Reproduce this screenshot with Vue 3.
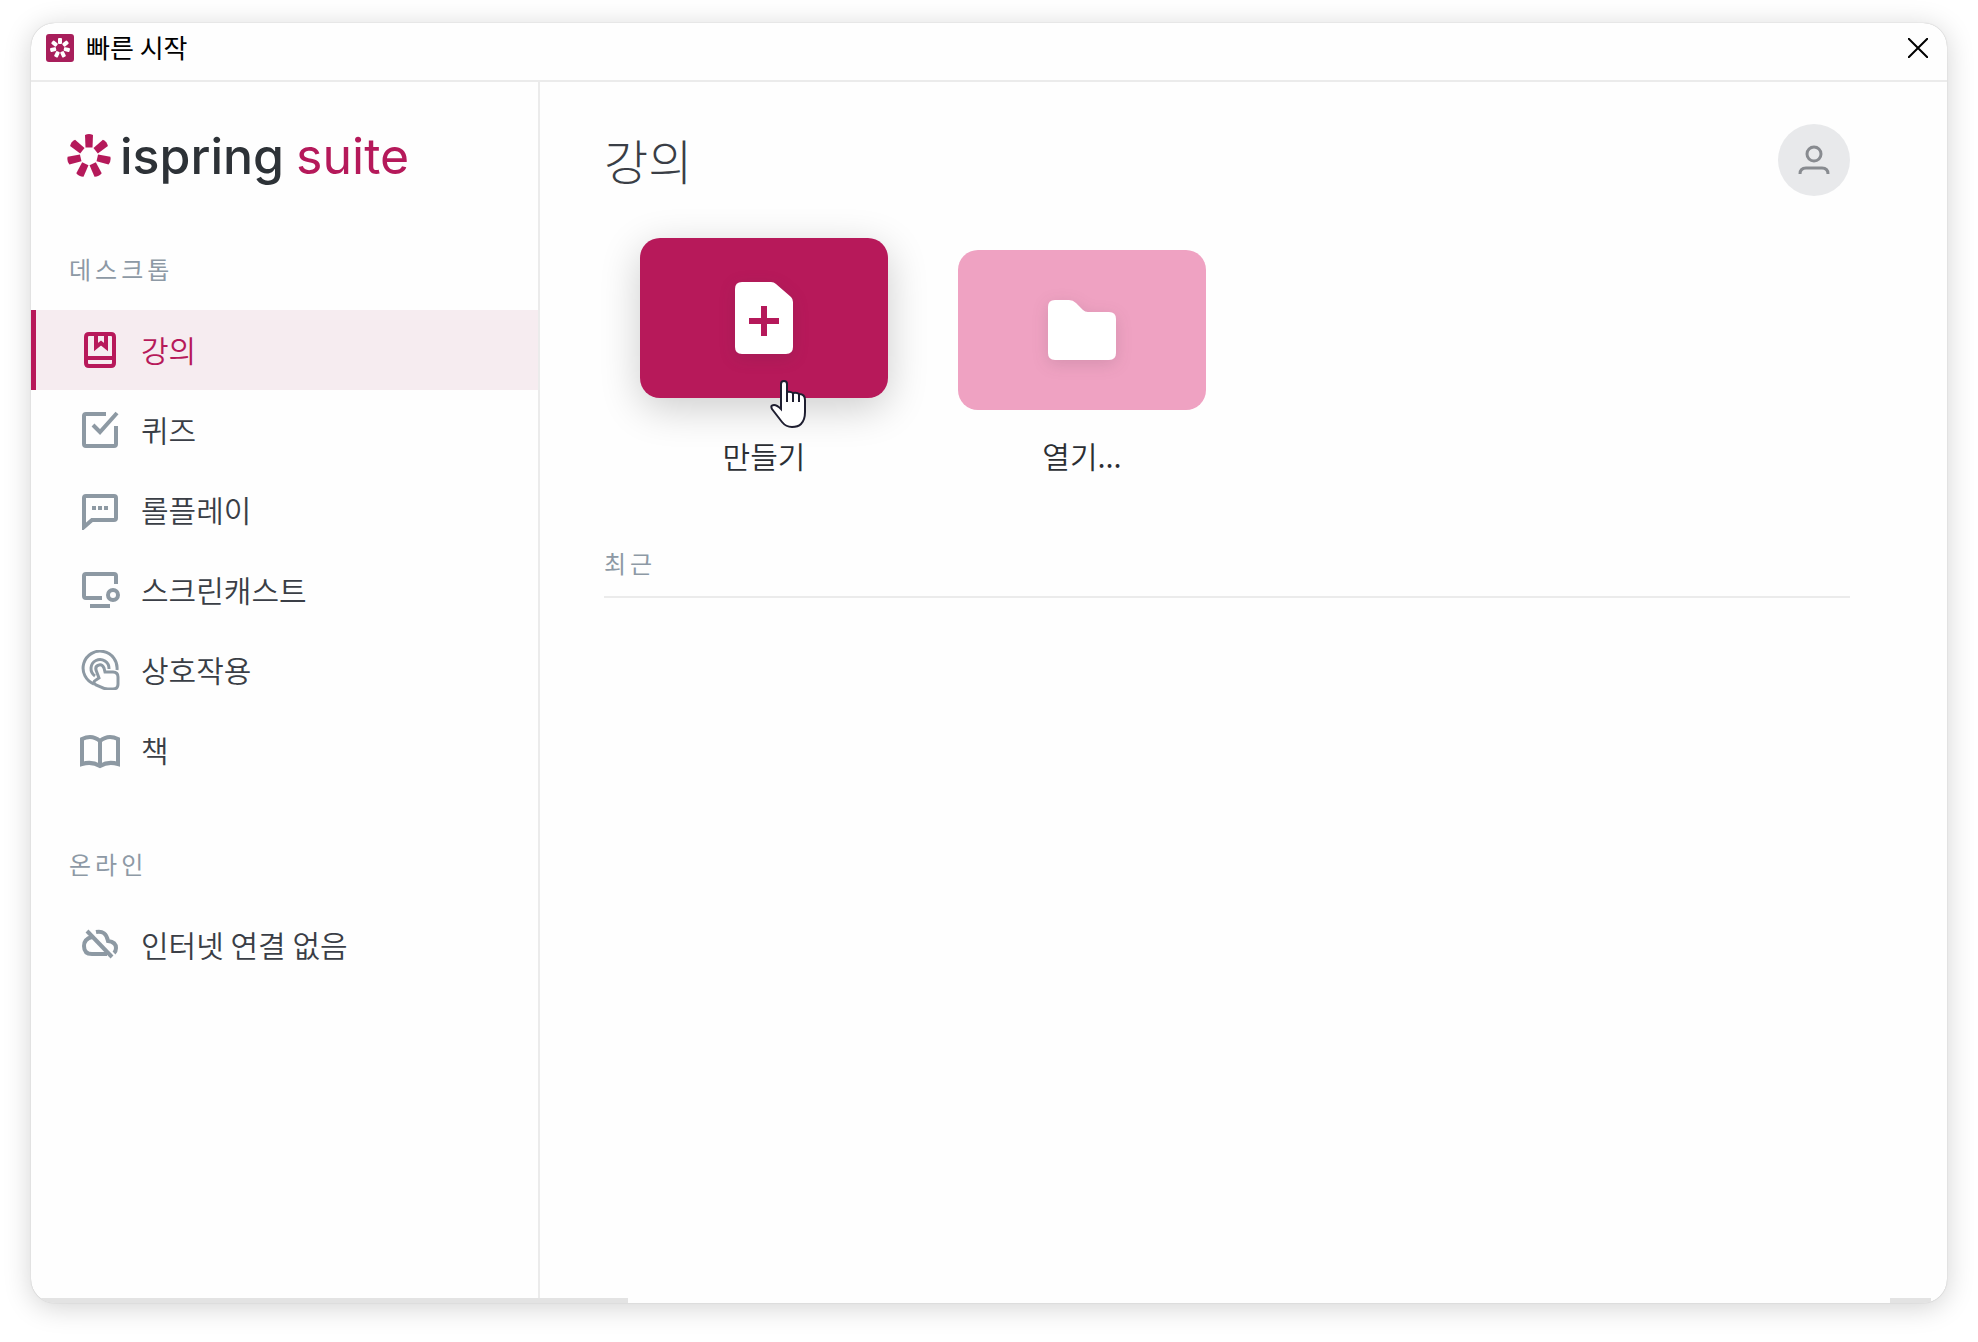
<template>
  <div class="window">
    <header class="titlebar">
      <svg class="app-icon" viewBox="0 0 28 28" aria-hidden="true">
        <rect width="28" height="28" rx="3" fill="#a81e5b" />
        <g fill="#fff">
          <rect
            v-for="n in 7"
            :key="n"
            x="12"
            y="4"
            width="4"
            height="6"
            rx="1"
            :transform="`rotate(${petalAngle(n)} 14 14)`"
          />
        </g>
      </svg>
      <span class="titlebar-text">빠른 시작</span>
      <button class="close" type="button" aria-label="닫기">
        <svg viewBox="0 0 20 20"><path d="M0 0L20 20M20 0L0 20" /></svg>
      </button>
    </header>

    <div class="body">
      <aside class="sidebar">
        <div class="logo">
          <svg class="logo-mark" viewBox="0 0 44 44" aria-hidden="true">
            <path
              v-for="n in 7"
              :key="n"
              d="M18 1Q22 -1 26 1L25.500 13.500H18.500Z"
              :transform="`rotate(${petalAngle(n)} 22 22)`"
            />
          </svg>
          <span class="logo-name">ispring</span>
          <span class="logo-product">suite</span>
        </div>

        <nav v-for="group in groups" :key="group.title" class="group">
          <h2 class="label">{{ group.title }}</h2>
          <button
            v-for="item in group.items"
            :key="item.text"
            type="button"
            class="nav-item"
            :class="{ 'nav-item--active': item.text === active }"
            @click="active = item.text"
          >
            <svg class="nav-icon" viewBox="0 0 40 40" aria-hidden="true">
              <path
                v-for="(d, i) in item.paths"
                :key="i"
                :d="d"
                :stroke-width="item.stroke"
              />
            </svg>
            <span>{{ item.text }}</span>
          </button>
        </nav>
      </aside>

      <main class="main">
        <header class="main-header">
          <h1>강의</h1>
          <button class="avatar" type="button" aria-label="계정">
            <svg viewBox="0 0 32 32">
              <circle cx="16" cy="10" r="7" />
              <path d="M2 30Q2 24 8 24H24Q30 24 30 30" />
            </svg>
          </button>
        </header>

        <div class="cards">
          <button class="card card--create" type="button">
            <span class="tile">
              <svg class="tile-icon" width="58" height="72" viewBox="0 0 58 72">
                <path d="M7 0H36Q39 0 41 2L56 15Q58 17 58 20V65Q58 72 51 72H7Q0 72 0 65V7Q0 0 7 0Z" fill="#fff" />
                <path d="M29 24V54M14 39H44" stroke="#b5195a" stroke-width="6" />
              </svg>
              <!-- Mauszeiger -->
              <svg class="pointer" viewBox="0 0 36 48" aria-hidden="true">
                <path
                  d="M11 28V4Q11 1 14 1Q17 1 17 4V12Q20 11 23 13Q27 12 29 14Q35 14 35 20V32Q35 40 31 44Q28 47 22 47Q16 47 12 42L2 29Q0 25 4 25Q7 25 11 29Z"
                  fill="#fff"
                />
                <path d="M17 12V22M23 13V22M29 14V22" />
              </svg>
            </span>
            <span class="card-text">만들기</span>
          </button>

          <button class="card card--open" type="button">
            <span class="tile">
              <svg class="tile-icon" width="68" height="60" viewBox="0 0 68 60">
                <path d="M7 0H21Q25 0 28 3L35 10Q37 12 40 12H61Q68 12 68 19V53Q68 60 61 60H7Q0 60 0 53V7Q0 0 7 0Z" fill="#fff" />
              </svg>
            </span>
            <span class="card-text">열기...</span>
          </button>
        </div>

        <section class="recent">
          <h2 class="recent-title">최근</h2>
        </section>
      </main>
    </div>

    <footer class="edge">
      <span class="edge-left" />
      <span class="edge-right" />
    </footer>
  </div>
</template>

<script setup>
import { ref } from "vue";

const active = ref("강의");

const groups = [
  {
    title: "데스크톱",
    items: [
      {
        text: "강의",
        stroke: 4,
        paths: [
          "M9 4H31Q34 4 34 7V33Q34 36 31 36H9Q6 36 6 33V7Q6 4 9 4Z",
          "M6 28H34",
          "M16 5V17L21 13L26 17V5",
        ],
      },
      {
        text: "퀴즈",
        stroke: 4,
        paths: ["M26 4H6Q4 4 4 6V34Q4 36 6 36H34Q36 36 36 34V16", "M13 15L20 22L37 3"],
      },
      {
        text: "롤플레이",
        stroke: 4,
        paths: [
          "M4 37V8Q4 6 6 6H34Q36 6 36 8V28Q36 30 34 30H12Z",
          "M12 18H16M18 18H22M24 18H28",
        ],
      },
      {
        text: "스크린캐스트",
        stroke: 4,
        paths: [
          "M36 14V6Q36 4 34 4H6Q4 4 4 6V26Q4 28 6 28H22",
          "M28 25a5 5 0 1 0 10 0a5 5 0 1 0 -10 0",
          "M10 36H30",
        ],
      },
      {
        text: "상호작용",
        stroke: 3,
        paths: [
          "M14 34A17 17 0 1 1 37 20",
          "M15 26A9 9 0 1 1 29 19",
          "M19 28L16 20Q15 16 19 15Q22 14 24 18L25 22H33Q38 22 38 27V34Q38 39 33 39H28Q24 39 21 37L16 35Q12 32 16 30Z",
        ],
      },
      {
        text: "책",
        stroke: 4,
        paths: ["M20 11Q12 4 2 9V34Q12 31 20 36Q28 31 38 34V9Q28 4 20 11V37"],
      },
    ],
  },
  {
    title: "온라인",
    items: [
      {
        text: "인터넷 연결 없음",
        stroke: 4,
        paths: [
          "M12 12Q4 14 4 21Q4 29 12 29H27",
          "M16 7Q26 5 28 16Q36 17 36 23Q36 26 34 28",
          "M7 6L32 32",
        ],
      },
    ],
  },
];

function petalAngle(n) {
  return ((n - 1) * 360) / 7;
}
</script>

<style>
body {
  margin: 0;
  background: #fff;
}
</style>

<style scoped>
.window {
  box-sizing: border-box;
  display: flex;
  flex-direction: column;
  min-height: calc(100vh - 62px);
  margin: 23px 31px 39px;
  background: #fefefe;
  border-radius: 24px;
  overflow: hidden;
  box-shadow: 0 0 1px rgba(0, 0, 0, 0.3), 0 4px 28px rgba(0, 0, 0, 0.18);
  font-family: "Noto Sans CJK KR", sans-serif;
  font-size: 30px;
  font-weight: 350;
  color: #3a3e46;
}

button {
  padding: 0;
  border: 0;
  background: none;
  font: inherit;
  color: inherit;
  cursor: pointer;
}

h1,
h2 {
  margin: 0;
  font-weight: 300;
}

svg {
  display: block;
  fill: none;
}

/* Titelleiste */

.titlebar {
  display: flex;
  align-items: center;
  height: 50px;
  padding: 0 19px 7px 15px;
  border-bottom: 2px solid #ebebeb;
}

.app-icon {
  width: 28px;
  height: 28px;
}

.titlebar-text {
  flex: 1;
  margin-left: 12px;
  padding-bottom: 2px;
  font-size: 26px;
  font-weight: 400;
  line-height: 32px;
  color: #000;
}

.close svg {
  width: 20px;
  height: 20px;
  stroke: #000;
  stroke-width: 2;
}

.body {
  display: flex;
  flex: 1;
}

/* Seitenleiste */

.sidebar {
  box-sizing: border-box;
  width: 509px;
  flex-shrink: 0;
  border-right: 2px solid #ebebeb;
}

.logo {
  display: flex;
  align-items: center;
  height: 148px;
  padding-left: 36px;
  font-family: Inter, sans-serif;
  font-size: 50px;
  line-height: 60px;
}

.logo-mark {
  width: 44px;
  height: 44px;
  fill: #b5195a;
}

.logo-name {
  margin-left: 9px;
  font-weight: 500;
  color: #2d3237;
}

.logo-product {
  margin-left: 12px;
  font-weight: 400;
  color: #b5195a;
}

.group + .group {
  margin-top: 35px;
}

.label {
  height: 78px;
  padding: 0 0 2px 38px;
  font-size: 24px;
  font-weight: 400;
  line-height: 78px;
  letter-spacing: 4px;
  color: #8d99a5;
}

.nav-item {
  box-sizing: border-box;
  display: flex;
  align-items: center;
  width: 100%;
  height: 80px;
  padding-left: 44px;
  border-left: 5px solid transparent;
}

.nav-item span {
  margin-left: 21px;
  padding-bottom: 2px;
}

.nav-icon {
  width: 40px;
  height: 40px;
  stroke: #8d99a3;
}

.nav-item--active {
  background: #f6ecf0;
  border-left-color: #b7195a;
  color: #b7195a;
}

.nav-item--active .nav-icon {
  stroke: #b7195a;
}

/* Inhalt */

.main {
  flex: 1;
  padding: 42px 97px 42px 64px;
}

.main-header {
  display: flex;
  align-items: center;
  justify-content: space-between;
  height: 72px;
}

h1 {
  padding-bottom: 2px;
  font-size: 48px;
  line-height: 70px;
}

.avatar {
  display: flex;
  align-items: center;
  justify-content: center;
  width: 72px;
  height: 72px;
  border-radius: 50%;
  background: #e8e9eb;
}

.avatar svg {
  width: 32px;
  height: 32px;
  stroke: #888b90;
  stroke-width: 3;
}

.cards {
  display: flex;
  gap: 70px;
  margin: 54px 0 0 36px;
}

.card {
  display: flex;
  flex-direction: column;
  align-items: center;
  gap: 25px;
  width: 248px;
}

.tile {
  position: relative;
  display: flex;
  align-items: center;
  justify-content: center;
  width: 100%;
  height: 160px;
  border-radius: 20px;
}

.card--create .tile {
  background: #b7195a;
  box-shadow: 0 10px 40px rgba(0, 0, 0, 0.2);
  transform: translateY(-12px);
}

.card--open .tile {
  background: #efa2c2;
}

.tile-icon {
  filter: drop-shadow(0 4px 8px rgba(60, 40, 60, 0.14));
}

.pointer {
  position: absolute;
  left: 130px;
  top: 142px;
  width: 36px;
  height: 48px;
  stroke: #1e1e30;
  stroke-width: 2;
}

.card-text {
  line-height: 40px;
  color: #2b2e33;
}

.recent {
  margin-top: 68px;
  padding-bottom: 13px;
  border-bottom: 2px solid #ebebeb;
}

.recent-title {
  font-size: 24px;
  font-weight: 400;
  line-height: 40px;
  letter-spacing: 4px;
  color: #8d99a5;
}

/* Unterer Fensterrand */

.edge {
  display: flex;
  justify-content: space-between;
  height: 5px;
  padding-right: 16px;
}

.edge-left {
  width: 597px;
  background: #e3e3e3;
}

.edge-right {
  width: 41px;
  background: #e3e3e3;
}
</style>
